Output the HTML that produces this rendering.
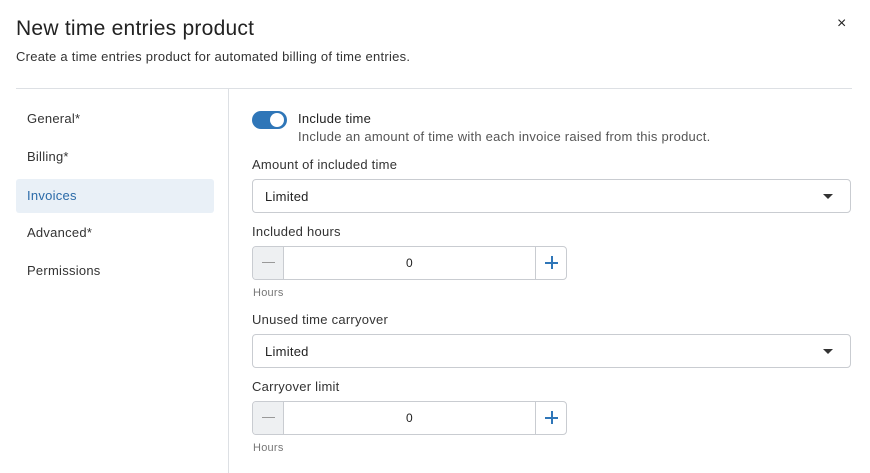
<!DOCTYPE html>
<html><head><style>
*{box-sizing:border-box;margin:0;padding:0}
body{width:870px;height:473px;background:#fff;font-family:"Liberation Sans",sans-serif;color:#222;position:relative;overflow:hidden;letter-spacing:0.25px}
.a{position:absolute;white-space:nowrap}
.sel{position:absolute;left:252px;width:599px;height:34px;border:1px solid #c9ccd1;border-radius:4px;font-size:13px;padding:9px 12px}
.sel:after{content:"";position:absolute;right:17px;top:14px;border-left:5px solid transparent;border-right:5px solid transparent;border-top:5px solid #333}
.st{position:absolute;left:252px;width:315px;height:34px;border:1px solid #c9ccd1;border-radius:4px;overflow:hidden}
.st .m{position:absolute;left:0;top:0;width:31px;height:32px;background:#eef0f2;border-right:1px solid #c9ccd1}
.st .m:after{content:"";position:absolute;left:9px;top:15px;width:13px;height:1px;background:#999}
.st .p{position:absolute;right:0;top:0;width:31px;height:32px;border-left:1px solid #c9ccd1}
.st .p:before{content:"";position:absolute;left:9px;top:15px;width:13px;height:1.5px;background:#2f76b8}
.st .p:after{content:"";position:absolute;left:15px;top:9px;width:1.5px;height:13px;background:#2f76b8}
.st .v{position:absolute;left:31px;right:31px;top:9px;text-align:center;font-size:12px}
.lbl{font-size:13px;color:#333}
.nav{font-size:13px;color:#333;left:27px}
.h{font-size:11px;color:#777;left:253px}
</style></head><body>
<div class="a" style="left:16px;top:17px;font-size:21px;color:#222">New time entries product</div>
<div class="a" style="left:16px;top:49px;font-size:13px;color:#333">Create a time entries product for automated billing of time entries.</div>
<div class="a" style="left:837px;top:15px;font-size:16px;color:#222">×</div>
<div class="a" style="left:16px;top:88px;width:836px;height:1px;background:#dde0e4"></div>
<div class="a" style="left:228px;top:89px;width:1px;height:384px;background:#dde0e4"></div>
<div class="a nav" style="top:111px">General*</div>
<div class="a nav" style="top:149px">Billing*</div>
<div class="a" style="left:16px;top:179px;width:198px;height:34px;background:#e9f0f7;border-radius:3px"></div>
<div class="a nav" style="top:188px;color:#2a6aa8">Invoices</div>
<div class="a nav" style="top:225px">Advanced*</div>
<div class="a nav" style="top:263px">Permissions</div>
<div class="a" style="left:252px;top:111px;width:35px;height:18px;border-radius:9px;background:#2f76b8"></div>
<div class="a" style="left:270px;top:113px;width:14px;height:14px;border-radius:50%;background:#fff"></div>
<div class="a" style="left:298px;top:111px;font-size:13px;color:#222">Include time</div>
<div class="a" style="left:298px;top:129px;font-size:13px;color:#555">Include an amount of time with each invoice raised from this product.</div>
<div class="a lbl" style="left:252px;top:157px">Amount of included time</div>
<div class="sel" style="top:179px">Limited</div>
<div class="a lbl" style="left:252px;top:224px">Included hours</div>
<div class="st" style="top:246px"><div class="m"></div><div class="v">0</div><div class="p"></div></div>
<div class="a h" style="top:287px">Hours</div>
<div class="a lbl" style="left:252px;top:312px">Unused time carryover</div>
<div class="sel" style="top:334px">Limited</div>
<div class="a lbl" style="left:252px;top:379px">Carryover limit</div>
<div class="st" style="top:401px"><div class="m"></div><div class="v">0</div><div class="p"></div></div>
<div class="a h" style="top:442px">Hours</div>
</body></html>
